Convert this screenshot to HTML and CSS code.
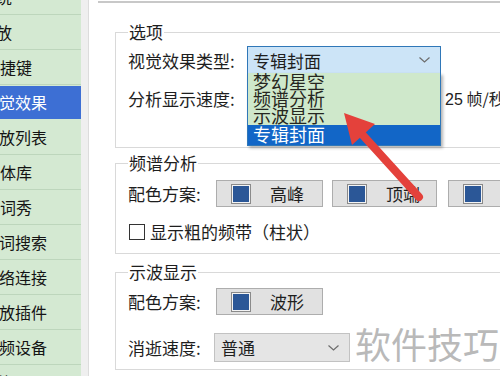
FILE: index.html
```html
<!DOCTYPE html>
<html lang="zh-CN">
<head>
    <meta charset="UTF-8">
    <title>视觉效果</title>
    <link rel="stylesheet" href="styles.css">
</head>
<body>
    <!-- Menu lateral -->
    <aside class="sidebar">
        <ul class="nav">
            <li class="short">系统</li>
            <li class="short">播放</li>
            <li class="mid">快捷键</li>
            <li class="active">视觉效果</li>
            <li>播放列表</li>
            <li class="mid">字体库</li>
            <li class="mid">歌词秀</li>
            <li>歌词搜索</li>
            <li>网络连接</li>
            <li>播放插件</li>
            <li>音频设备</li>
            <li class="short">其他</li>
        </ul>
    </aside>
    <div class="divider"></div>

    <main class="content">
        <div class="panel">
            <fieldset class="group group-options">
                <legend>选项</legend>
                <div class="row row-first">
                    <span class="label wide">视觉效果类型:</span>
                    <div class="combo">
                        <div class="select active-select">
                            <span>专辑封面</span>
                            <svg class="chevron" width="11" height="6" viewBox="0 0 11 6"><polyline points="0.5,0.5 5.5,5 10.5,0.5" fill="none" stroke="#6d6d6d" stroke-width="1.2"/></svg>
                        </div>
                        <ul class="dropdown">
                            <li>梦幻星空</li>
                            <li>频谱分析</li>
                            <li>示波显示</li>
                            <li class="selected">专辑封面</li>
                        </ul>
                    </div>
                </div>
                <div class="row row-second">
                    <span class="label wide">分析显示速度:</span>
                    <div class="slider"></div>
                    <span class="fps"><span class="num">25</span> 帧/秒</span>
                </div>
            </fieldset>

            <fieldset class="group group-spectrum">
                <legend>频谱分析</legend>
                <div class="row row-buttons">
                    <span class="label">配色方案:</span>
                    <button class="color-btn"><span class="swatch"></span>高峰</button>
                    <button class="color-btn narrow"><span class="swatch"></span>顶端</button>
                    <button class="color-btn"><span class="swatch"></span>背景</button>
                </div>
                <label class="check-row">
                    <span class="checkbox"></span>显示粗的频带（柱状）
                </label>
            </fieldset>

            <fieldset class="group group-wave">
                <legend>示波显示</legend>
                <div class="row row-buttons">
                    <span class="label">配色方案:</span>
                    <button class="color-btn"><span class="swatch"></span>波形</button>
                </div>
                <div class="row row-speed">
                    <span class="label short">消逝速度:</span>
                    <div class="select plain">
                        <span>普通</span>
                        <svg class="chevron" width="11" height="6" viewBox="0 0 11 6"><polyline points="0.5,0.5 5.5,5 10.5,0.5" fill="none" stroke="#6d6d6d" stroke-width="1.2"/></svg>
                    </div>
                </div>
            </fieldset>
        </div>
    </main>

    <!-- Seta vermelha e marca d'água por cima -->
    <svg class="arrow" width="500" height="376" viewBox="0 0 500 376">
        <line x1="419" y1="197" x2="360" y2="132" stroke="#e4413b" stroke-width="8" stroke-linecap="round"/>
        <polygon points="344,113 375,124 352,145" fill="#e4413b"/>
    </svg>
    <div class="watermark">软件技巧</div>
</body>
</html>
```

FILE: styles.css
```css
* {
    box-sizing: border-box;
}
body {
    margin: 0;
    width: 500px;
    height: 376px;
    overflow: hidden;
    display: flex;
    position: relative;
    background-color: #fff;
    font-family: "Noto Sans CJK SC", sans-serif;
    font-size: 17px;
    color: #1e1e1e;
}

/* Menu lateral */
.sidebar {
    width: 81px;
    flex: none;
    background-color: #d4e9d2;
    overflow: hidden;
}
.nav {
    list-style: none;
    margin: -20px 0 0;
    padding: 0;
    font-size: 16px;
}
.nav li {
    height: 35px;
    line-height: 34px;
    border-bottom: 1px solid #bdd6bc;
    text-indent: -17px;
    white-space: nowrap;
    overflow: hidden;
    color: #141414;
}
.nav li.mid {
    text-indent: -16px;
}
.nav li.short {
    text-indent: -20px;
}
.nav li.active {
    background-color: #3d6fd4;
    color: #fff;
    border-top: 1px solid #d4e9d2;
    border-bottom: 1px solid #d4e9d2;
    line-height: 32px;
}
.divider {
    width: 8px;
    flex: none;
    background-color: #efefef;
    border-right: 1px solid #dcdcdc;
}

/* Conteúdo */
.content {
    flex: 1;
    padding: 1px 0 0 9px;
    overflow: hidden;
}
.panel {
    border-top: 2px solid #c8c8c8;
    padding: 19px 0 0 17px;
}
.group {
    margin: 0;
    border: 1px solid #d9d9d9;
    border-right: none;
    padding: 0 0 0 12px;
    min-width: 0;
}
.group legend {
    padding: 0 1px;
    font-size: 17px;
    line-height: 20px;
}
.group-options {
    padding-bottom: 35px;
}
.group-spectrum {
    margin-top: 5px;
    padding-bottom: 12px;
}
.group-wave {
    margin-top: 8px;
    padding-bottom: 7px;
}
.row {
    display: flex;
    align-items: center;
    height: 28px;
    white-space: nowrap;
}
.row-first {
    margin-top: 4px;
}
.row-second {
    margin-top: 10px;
}
.row-buttons {
    margin-top: 7px;
    height: 27px;
}
.group-wave .row-buttons {
    margin-top: 6px;
}
.row-speed {
    margin-top: 18px;
    height: 29px;
}
.label {
    width: 88px;
    flex: none;
}
.label.wide {
    width: 119px;
}
.label.short {
    width: 86px;
}

/* Caixas de seleção */
.combo {
    position: relative;
    width: 194px;
    height: 28px;
}
.select {
    display: flex;
    align-items: center;
    justify-content: space-between;
    height: 100%;
    padding: 0 10px 0 5px;
    font-size: 17px;
}
.active-select {
    background-color: #cce4f7;
    border: 1px solid #2f77b8;
}
.select.plain {
    width: 136px;
    background-color: #e5e5e5;
    border: 1px solid #c2c2c2;
    padding-left: 6px;
}
.chevron {
    flex: none;
}
.dropdown {
    position: absolute;
    top: 27px;
    left: 0;
    width: 194px;
    margin: 0;
    padding: 0;
    list-style: none;
    background-color: #cfe8cb;
    border: 1px solid #2f77b8;
    border-top: none;
    box-shadow: 2px 2px 3px rgba(0, 0, 0, 0.3);
    z-index: 2;
}
.dropdown li {
    height: 17px;
    line-height: 16px;
    font-size: 18px;
    padding-left: 5px;
    color: #262620;
}
.dropdown li.selected {
    height: 20px;
    line-height: 19px;
    margin-top: 1px;
    background-color: #1266c7;
    color: #fff;
}
.slider {
    width: 198px;
    flex: none;
}
.fps {
    font-size: 16px;
    color: #222;
}
.fps .num {
    font-family: "Liberation Sans", sans-serif;
}

/* Botões de cor */
.color-btn {
    display: flex;
    align-items: center;
    width: 107px;
    height: 27px;
    flex: none;
    margin: 0 9px 0 0;
    padding: 0 0 0 16px;
    background-color: #e1e1e1;
    border: 1px solid #adadad;
    font-family: inherit;
    font-size: 17px;
    color: #1e1e1e;
}
.color-btn.narrow {
    width: 105px;
    margin-right: 11px;
}
.swatch {
    width: 16px;
    height: 16px;
    margin-right: 21px;
    background-color: #2b5797;
    box-shadow: 0 0 0 1px #f4f4f4, 0 0 0 2px #8a8a8a;
}
.check-row {
    display: flex;
    align-items: center;
    margin-top: 15px;
    height: 19px;
    white-space: nowrap;
}
.checkbox {
    width: 16px;
    height: 16px;
    margin: 0 5px 0 1px;
    border: 1px solid #333;
    background-color: #fff;
}

/* Camadas por cima */
.arrow {
    position: absolute;
    left: 0;
    top: 0;
    pointer-events: none;
    z-index: 5;
}
.watermark {
    position: absolute;
    left: 355px;
    top: 318px;
    font-size: 36px;
    line-height: 50px;
    color: #b9b9b9;
    z-index: 4;
}
```
